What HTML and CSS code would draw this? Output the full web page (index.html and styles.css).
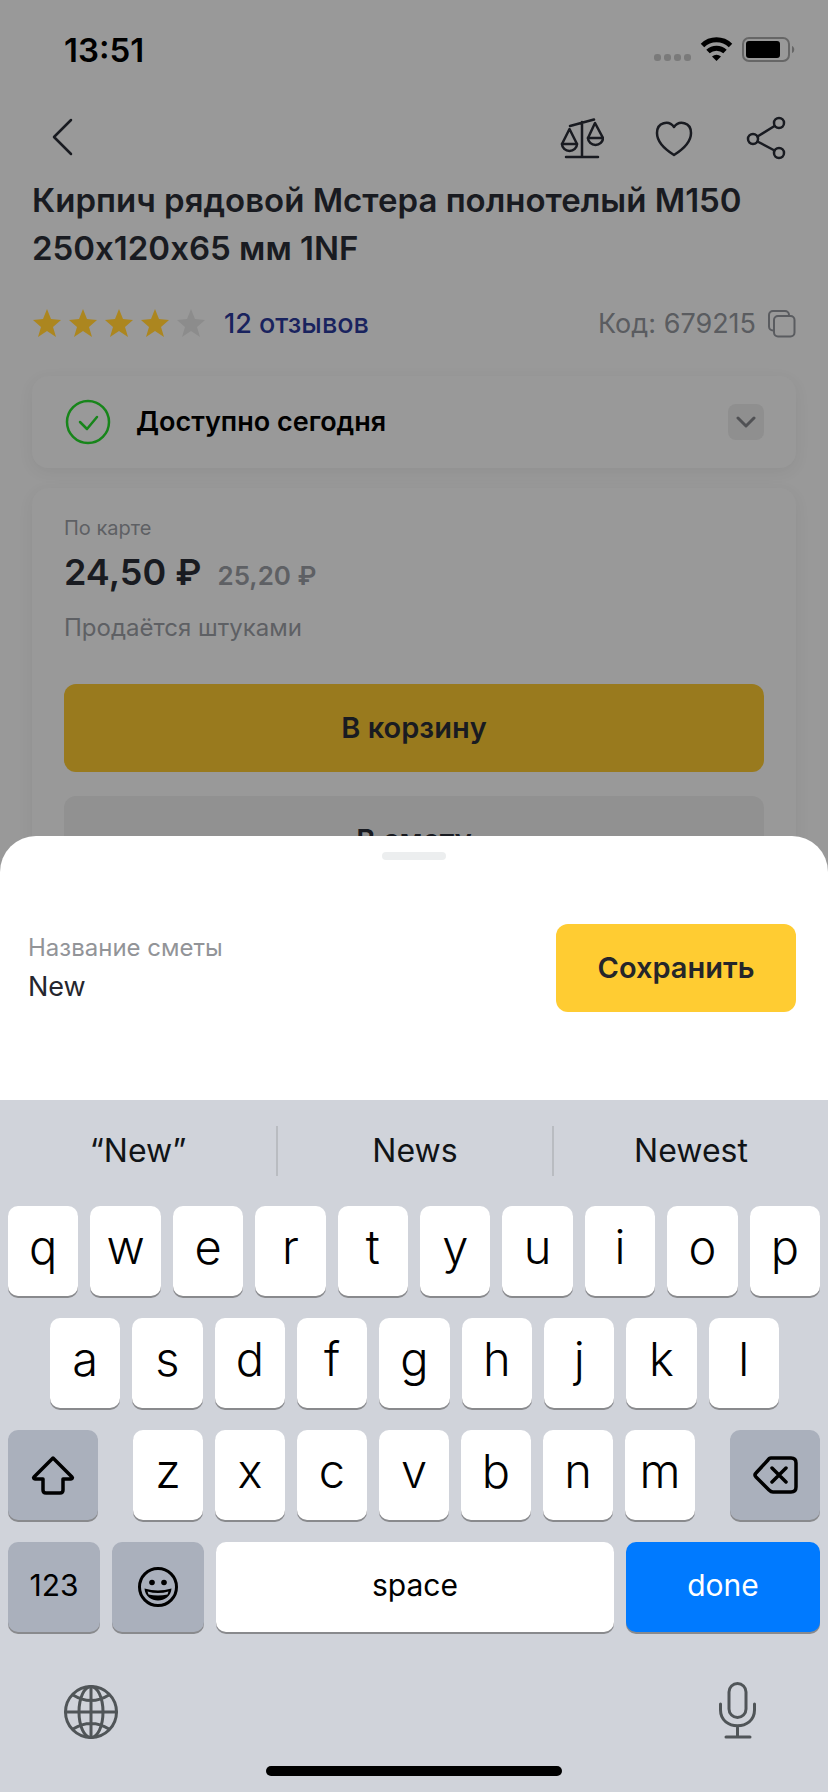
FILE: index.html
```html
<!DOCTYPE html>
<html lang="ru">
<head>
<meta charset="utf-8">
<meta name="viewport" content="width=device-width, initial-scale=1">
<title>Кирпич рядовой Мстера полнотелый М150</title>
<link rel="stylesheet" href="styles.css">
</head>
<body>
<div class="screen">
  <main class="product">
    <div class="status">
      <time class="status-time">13:51</time>
      <div class="status-icons">
        <svg width="142" height="28" viewBox="0 0 142 28" aria-hidden="true">
          <g fill="#7a7a7a"><rect x="0" y="18" width="7" height="7" rx="3"/><rect x="10" y="18" width="7" height="7" rx="3"/><rect x="20" y="18" width="7" height="7" rx="3"/><rect x="30" y="18" width="7" height="7" rx="3"/></g>
          <g fill="none" stroke="#000" stroke-width="5"><path d="M48.500 9.500a20 20 0 0 1 28 0"/><path d="M54 15.500a12.500 12.500 0 0 1 17 0"/></g>
          <path d="M62.500 25l-4.500-4.500a7 7 0 0 1 9 0z"/>
          <rect x="89" y="2" width="46" height="23" rx="6" fill="none" stroke="#666" stroke-width="2"/>
          <rect x="92" y="5" width="34" height="17" rx="3"/>
          <path d="M138 10c3 1 3 6 0 7z" fill="#666"/>
        </svg>
      </div>
    </div>
    <nav class="toolbar">
      <button class="icon-button" type="button" aria-label="Назад"><svg width="24" height="40" viewBox="0 0 24 40"><path d="M21 2L4 19l17 17" class="line"/></svg></button>
      <div class="toolbar-actions">
        <button class="icon-button" type="button" aria-label="Сравнить"><svg width="44" height="44" viewBox="0 0 44 44"><g class="line"><path d="M22 6v35M6 41h32M10 10L34 3.500M9.500 13L2 28h15L9.500 13zM35 7L28 22h15L35 7z"/><path d="M2 28a7.500 7 0 0 0 15 0M28 22a7.500 7 0 0 0 15 0"/></g></svg></button>
        <button class="icon-button" type="button" aria-label="В избранное"><svg width="40" height="40" viewBox="0 0 40 40"><path class="line" d="M20 37C12 32 3 25 3 15 3 4 15 2 20 9 25 2 37 4 37 15 37 25 28 32 20 37z"/></svg></button>
        <button class="icon-button" type="button" aria-label="Поделиться"><svg width="44" height="44" viewBox="0 0 44 44"><g class="line"><circle cx="9" cy="23" r="5"/><circle cx="35" cy="7" r="5"/><circle cx="35" cy="37" r="5"/><path d="M13.500 20.500L30.500 10M13.500 25.500L30.500 34.500"/></g></svg></button>
      </div>
    </nav>
    <h1 class="title">Кирпич рядовой Мстера полнотелый М150 250х120х65 мм 1NF</h1>
    <div class="meta">
      <div class="rating">
        <svg class="stars" width="174" height="30" viewBox="0 0 174 30" role="img" aria-label="4 из 5">
          <defs><path id="star" d="M15 0l4 10 10 1-8 7 3 10-9-6-9 6 3-10-8-7 10-1z"/></defs>
          <g fill="#ac861f"><use href="#star"/><use href="#star" x="36"/><use href="#star" x="72"/><use href="#star" x="108"/></g>
          <use href="#star" x="144" fill="#8c8c8c"/>
        </svg>
        <a class="reviews" href="#reviews">12 отзывов</a>
      </div>
      <div class="code">
        <span>Код: 679215</span>
        <button class="icon-button" type="button" aria-label="Скопировать код"><svg width="28" height="28" viewBox="0 0 28 28" fill="none" stroke="#5a5c60" stroke-width="2"><path d="M5 20.500a4 4 0 0 1-4-4V5a4 4 0 0 1 4-4h12a4 4 0 0 1 4 4"/><rect x="6" y="6" width="20.500" height="20.500" rx="4"/></svg></button>
      </div>
    </div>
    <section class="card availability">
      <svg width="48" height="48" viewBox="0 0 48 48" fill="none" stroke="#17851a" stroke-width="2.500" stroke-linecap="round" stroke-linejoin="round"><circle cx="24" cy="24" r="21"/><path d="M16 24l7 7 10-12"/></svg>
      <h2 class="availability-title">Доступно сегодня</h2>
      <button class="expand" type="button" aria-label="Развернуть"><svg width="20" height="12" viewBox="0 0 20 12"><path d="M2 2l8 8 8-8" fill="none" stroke="#505154" stroke-width="3" stroke-linecap="round" stroke-linejoin="round"/></svg></button>
    </section>
    <section class="card offer">
      <p class="offer-label">По карте</p>
      <p class="prices"><strong class="price">24,50 ₽</strong><span class="old-price">25,20 ₽</span></p>
      <p class="unit">Продаётся штуками</p>
      <button class="button button-dim" type="button">В корзину</button>
      <button class="button button-muted" type="button">В смету</button>
    </section>
  </main>

  <section class="sheet">
    <div class="handle"></div>
    <form class="estimate">
      <div class="field">
        <label class="field-label" for="estimate-name">Название сметы</label>
        <input class="field-input" id="estimate-name" type="text" value="New">
      </div>
      <button class="button button-save" type="button">Сохранить</button>
    </form>
  </section>

  <section class="keyboard" aria-label="Клавиатура">
    <div class="suggestions">
      <button class="suggestion" type="button">“New”</button>
      <button class="suggestion" type="button">News</button>
      <button class="suggestion" type="button">Newest</button>
    </div>
    <div class="keys">
      <div class="row">
        <button class="key" type="button">q</button><button class="key" type="button">w</button><button class="key" type="button">e</button><button class="key" type="button">r</button><button class="key" type="button">t</button><button class="key" type="button">y</button><button class="key" type="button">u</button><button class="key" type="button">i</button><button class="key" type="button">o</button><button class="key" type="button">p</button>
      </div>
      <div class="row row-inset">
        <button class="key" type="button">a</button><button class="key" type="button">s</button><button class="key" type="button">d</button><button class="key" type="button">f</button><button class="key" type="button">g</button><button class="key" type="button">h</button><button class="key" type="button">j</button><button class="key" type="button">k</button><button class="key" type="button">l</button>
      </div>
      <div class="row row-shift">
        <button class="key key-grey" type="button" aria-label="Shift"><svg width="44" height="40" viewBox="0 0 44 40"><path class="glyph" d="M22 3L3 22c-1 1 0 2 1 2h8v11q0 3 3 3h14q3 0 3-3V24h8c1 0 2-1 1-2z"/></svg></button>
        <div class="row row-letters">
          <button class="key" type="button">z</button><button class="key" type="button">x</button><button class="key" type="button">c</button><button class="key" type="button">v</button><button class="key" type="button">b</button><button class="key" type="button">n</button><button class="key" type="button">m</button>
        </div>
        <button class="key key-grey" type="button" aria-label="Delete"><svg width="46" height="40" viewBox="0 0 46 40"><path class="glyph" d="M19 3h20q5 0 5 5v24q0 5-5 5H21q-2 0-4-2L4 22q-2-2 0-4L16 5q1-2 3-2zM20 13l14 14M34 13L20 27"/></svg></button>
      </div>
      <div class="row row-bottom">
        <button class="key key-grey key-text" type="button">123</button>
        <button class="key key-grey" type="button" aria-label="Emoji"><svg width="42" height="42" viewBox="0 0 42 42"><circle cx="21" cy="21" r="18.500" fill="none" stroke="#000" stroke-width="3"/><circle cx="15" cy="16.500" r="2.800"/><circle cx="27" cy="16.500" r="2.800"/><path d="M7.500 22.500q13.500 4 27 0c-1 16-26 16-27 0z"/><path d="M10.500 25.500q10.500 3 21 0l-1 3q-9.500 2-19 0z" fill="#aab0bc"/></svg></button>
        <button class="key key-text" type="button">space</button>
        <button class="key key-done key-text" type="button">done</button>
      </div>
    </div>
    <div class="system">
      <button class="icon-button" type="button" aria-label="Язык"><svg width="56" height="56" viewBox="0 0 56 56"><g class="sys"><circle cx="28" cy="28" r="25.500"/><ellipse cx="28" cy="28" rx="12" ry="25.500"/><path d="M28 2.500v51M2.500 28h51M10 11q18 11 36 0M10 45q18-11 36 0"/></g></svg></button>
      <button class="icon-button" type="button" aria-label="Диктовка"><svg width="40" height="60" viewBox="0 0 40 60"><g class="sys"><rect x="11" y="1.500" width="17" height="34" rx="8.500"/><path d="M2.500 22v6c0 21 34 21 34 0v-6M19.500 44v11M8 55h24"/></g></svg></button>
    </div>
    <div class="home-bar"></div>
  </section>
</div>
</body>
</html>
```

FILE: styles.css
```css
* { box-sizing: border-box; }
body, h1, h2, p { margin: 0; }
body {
  font-family: Inter, "Noto Sans", sans-serif;
  color: #191b21;
  background: #999;
}
button, input { font: inherit; color: inherit; border: 0; padding: 0; background: none; }
svg { display: block; }

.screen { min-height: 100vh; display: flex; flex-direction: column; }

/* Product page, dimmed behind the sheet */
.product { flex: 1 1 0; overflow: hidden; padding: 0 32px; }
.status { display: flex; justify-content: space-between; align-items: center; height: 100px; padding-left: 32px; }
.status-time { font-size: 33px; line-height: 40px; font-weight: 600; color: #000; }
.toolbar { display: flex; justify-content: space-between; align-items: center; height: 76px; padding: 0 8px 0 18px; }
.toolbar-actions { display: flex; align-items: center; gap: 50px; }
.line { fill: none; stroke: #191b21; stroke-width: 2.5; stroke-linecap: round; stroke-linejoin: round; }
.title { font-size: 33px; line-height: 48px; font-weight: 600; }
.meta { display: flex; justify-content: space-between; align-items: center; height: 104px; font-size: 27px; line-height: 36px; }
.rating { display: flex; align-items: center; gap: 18px; }
.reviews { color: #19235e; font-weight: 500; text-decoration: none; }
.code { display: flex; align-items: center; gap: 12px; color: #5a5c60; }

.card { border-radius: 16px; background: #999; box-shadow: 0 4px 16px rgba(0, 0, 0, 0.06); }
.availability { display: flex; align-items: center; height: 92px; padding: 0 32px; gap: 24px; }
.availability-title { flex: 1; font-size: 27px; line-height: 36px; font-weight: 600; color: #000; }
.expand { display: flex; align-items: center; justify-content: center; width: 36px; height: 36px; border-radius: 8px; background: #8f8f8f; }
.offer { margin-top: 20px; padding: 24px 32px; color: #5e6064; }
.offer-label { font-size: 20px; line-height: 32px; }
.prices { display: flex; align-items: baseline; gap: 16px; line-height: 56px; }
.price { font-size: 36px; font-weight: 600; color: #191b21; }
.old-price { font-size: 26px; font-weight: 600; }
.unit { margin-bottom: 32px; font-size: 24px; line-height: 48px; }

.button { display: block; width: 100%; height: 88px; border-radius: 12px; font-size: 29px; line-height: 36px; font-weight: 600; color: #191b21; }
.button-dim { background: #997a1e; }
.button-muted { margin-top: 24px; background: #919191; }
.button-save { width: 240px; background: #ffcc32; color: #25262a; }

/* Estimate name sheet */
.sheet { position: relative; margin-top: -36px; padding: 16px 0 88px; border-radius: 36px 36px 0 0; background: #fff; }
.handle { width: 64px; height: 8px; margin: 0 auto 64px; border-radius: 4px; background: #eceeef; }
.estimate { display: flex; align-items: center; gap: 24px; padding: 0 32px 0 28px; }
.field { flex: 1; min-width: 0; }
.field-label { display: block; font-size: 24px; line-height: 36px; color: #929498; }
.field-input { display: block; width: 100%; height: 40px; font-size: 27px; color: #25262e; outline: 0; }

/* Keyboard */
.keyboard { padding-bottom: 16px; background: #d0d3da; color: #000; }
.suggestions { display: grid; grid-template-columns: repeat(3, 1fr); padding: 26px 0 30px; }
.suggestion { height: 50px; font-size: 32px; line-height: 40px; color: #111417; }
.suggestion + .suggestion { border-left: 2px solid #b9bcc1; }
.keys { display: grid; gap: 22px; padding: 0 8px; }
.row { display: flex; gap: 12px; }
.row-inset { padding: 0 41px 0 42px; }
.row-shift { display: grid; grid-template-columns: 90px 1fr 90px; gap: 35px; }
.row-letters { min-width: 0; }
.row-bottom { display: grid; grid-template-columns: 92px 92px 1fr 194px; }
.key {
  display: flex; flex: 1 1 0; align-items: center; justify-content: center;
  min-width: 0; height: 90px; padding-bottom: 8px;
  border-radius: 10px; background: #fff; box-shadow: 0 2px 0 #898a8d;
  font-size: 47px; line-height: 56px; font-weight: 300;
}
.key-grey { padding-bottom: 0; background: #aab0bc; }
.key-text { padding-bottom: 4px; font-size: 30px; line-height: 40px; font-weight: 400; }
.key-done { background: #007aff; color: #fff; }
.glyph { fill: none; stroke: #000; stroke-width: 3.5; stroke-linecap: round; stroke-linejoin: round; }
.system { display: flex; align-items: center; justify-content: space-between; height: 134px; padding: 26px 70px 0 63px; }
.sys { fill: none; stroke: #505558; stroke-width: 3; stroke-linecap: round; }
.home-bar { width: 296px; height: 10px; margin: 0 auto; border-radius: 5px; background: #000; }
```
